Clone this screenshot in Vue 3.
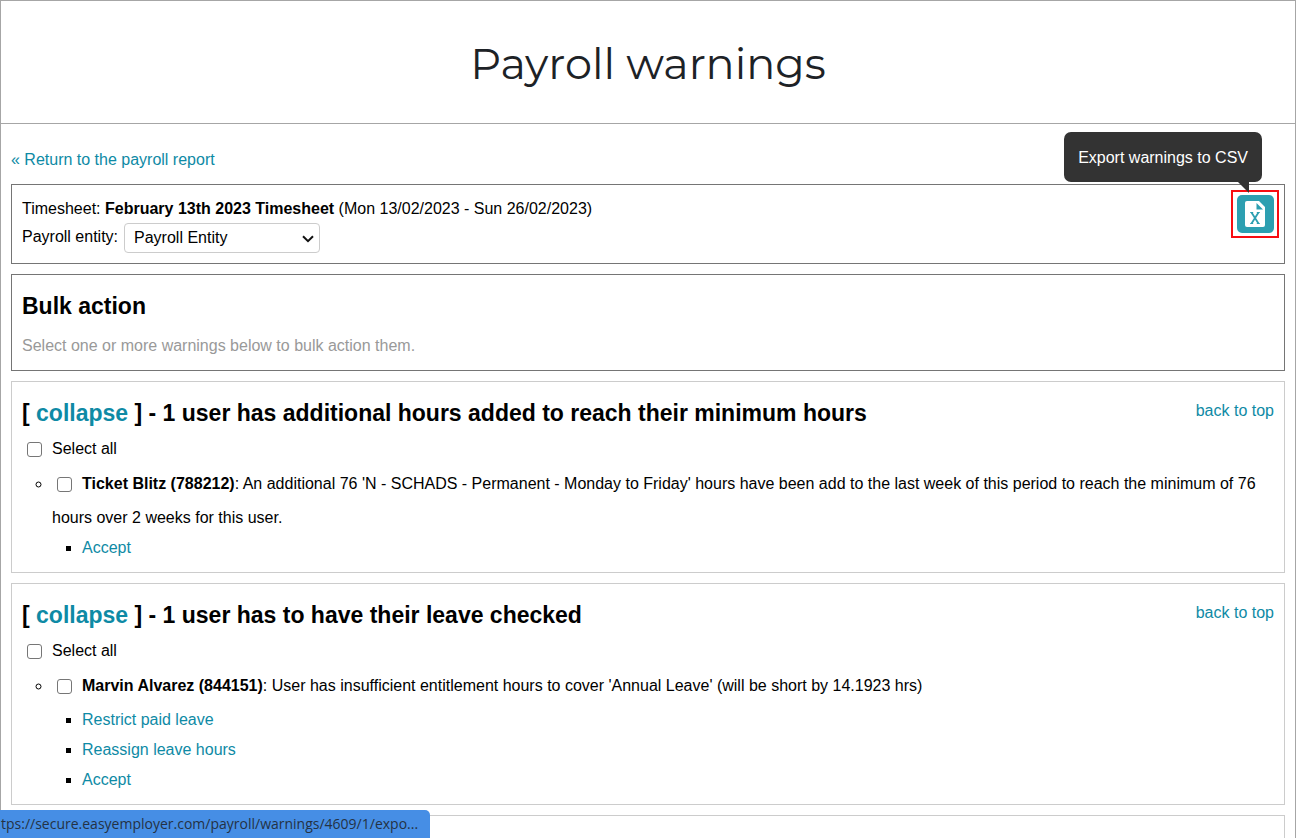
<script setup>
import { ref } from 'vue'

const entity = ref('Payroll Entity')

const groups = [
  {
    id: 'minimum-hours',
    title: '1 user has additional hours added to reach their minimum hours',
    user: 'Ticket Blitz (788212)',
    message:
      "An additional 76 'N - SCHADS - Permanent - Monday to Friday' hours have been add to the last week of this period to reach the minimum of 76 hours over 2 weeks for this user.",
    actions: ['Accept'],
  },
  {
    id: 'leave',
    title: '1 user has to have their leave checked',
    user: 'Marvin Alvarez (844151)',
    message:
      "User has insufficient entitlement hours to cover 'Annual Leave' (will be short by 14.1923 hrs)",
    actions: ['Restrict paid leave', 'Reassign leave hours', 'Accept'],
  },
]
</script>

<template>
  <div class="page">
    <header class="page-header">
      <h1>Payroll warnings</h1>
    </header>

    <main class="content">
      <a class="return" href="#">« Return to the payroll report</a>

      <section class="panel panel-info">
        <div class="info">
          <div class="timesheet">
            Timesheet: <strong>February 13th 2023 Timesheet</strong> (Mon 13/02/2023 - Sun 26/02/2023)
          </div>
          <div class="entity-row">
            <label for="entity">Payroll entity:</label>
            <span class="select-wrap">
              <select id="entity" v-model="entity">
                <option>Payroll Entity</option>
              </select>
              <svg class="chevron" viewBox="0 0 12 8" aria-hidden="true">
                <path d="M1 1.2 6 6.2 11 1.2" fill="none" stroke="#111" stroke-width="2" />
              </svg>
            </span>
          </div>
        </div>
        <div class="export">
          <button type="button" class="export-button" aria-label="Export warnings to CSV">
            <svg viewBox="0 0 20 26" aria-hidden="true">
              <path fill="#fff" d="M2 0H14L20 6V24Q20 26 18 26H2Q0 26 0 24V2Q0 0 2 0Z" />
              <path fill="#2d9fb1" d="M11.500 2 18 8.500H11.500Z" />
              <path d="M6.500 11.500 13.500 22.500M13.500 11.500 6.500 22.500" fill="none" stroke="#2d9fb1" stroke-width="1.800" />
              <path d="M5.200 11.500H8.200M11.800 11.500H14.800M5.200 22.500H8.200M11.800 22.500H14.800" stroke="#2d9fb1" stroke-width="1" />
            </svg>
          </button>
          <div class="tooltip" role="tooltip">Export warnings to CSV</div>
        </div>
      </section>

      <section class="panel panel-dark">
        <h2>Bulk action</h2>
        <p class="hint">Select one or more warnings below to bulk action them.</p>
      </section>

      <section v-for="group in groups" :key="group.id" class="panel">
        <div class="group-head">
          <h2>[ <a href="#">collapse</a> ] - {{ group.title }}</h2>
          <a class="top-link" href="#">back to top</a>
        </div>
        <label class="select-all"><input type="checkbox" />Select all</label>
        <ul class="warnings">
          <li>
            <input :id="group.id" class="row-check" type="checkbox" />
            <label :for="group.id"><strong>{{ group.user }}</strong>: {{ group.message }}</label>
            <ul class="actions">
              <li v-for="action in group.actions" :key="action"><a href="#">{{ action }}</a></li>
            </ul>
          </li>
        </ul>
      </section>

      <section class="panel panel-next"></section>
    </main>

    <div class="status">tps://secure.easyemployer.com/payroll/warnings/4609/1/expo...</div>
  </div>
</template>

<style>
body {
  background: #fff;
}
</style>

<style scoped>
.page {
  box-sizing: border-box;
  height: 100vh;
  overflow: hidden;
  border: 1px solid #a6a6a6;
  border-bottom: 0;
  color: #000;
  font: 16px/30px "Liberation Sans", Arial, sans-serif;
}

a {
  color: #0e8aa5;
  text-decoration: none;
}

.page-header {
  padding: 33px 0 29px;
  border-bottom: 1px solid #a6a6a6;
}

h1 {
  margin: 0;
  color: #1d2226;
  font: 400 43px/60px Montserrat, Inter, sans-serif;
  text-align: center;
}

.content {
  display: flex;
  flex-direction: column;
  gap: 10px;
  padding: 22px 10px 0;
}

.return {
  align-self: flex-start;
  line-height: 28px;
}

.panel {
  padding: 10px 10px 9px;
  border: 1px solid #ccc;
}

.panel-info,
.panel-dark {
  border-color: #757575;
}

.panel-info {
  display: flex;
  justify-content: space-between;
  align-items: flex-start;
  padding: 5px 5px 10px 10px;
}

.info {
  padding-top: 5px;
}

.timesheet {
  line-height: 28px;
}

.entity-row {
  display: flex;
  gap: 6px;
}

.entity-row label {
  line-height: 28px;
}

.select-wrap {
  position: relative;
  display: flex;
}

select {
  appearance: none;
  width: 196px;
  height: 30px;
  padding: 0 30px 0 9px;
  border: 1px solid #ccc;
  border-radius: 4px;
  background: #fff;
  color: #000;
  font: inherit;
  line-height: 28px;
}

.chevron {
  position: absolute;
  top: 12px;
  right: 6px;
  width: 12px;
  height: 8px;
  pointer-events: none;
}

.export {
  position: relative;
  padding: 3px 3px 3px 4px;
  border: 2px solid #f80d12;
}

.export-button {
  display: flex;
  align-items: center;
  justify-content: center;
  width: 37px;
  height: 38px;
  padding: 0 1px 0 0;
  border: 0;
  border-radius: 5px;
  background: #2d9fb1;
}

.export-button svg {
  width: 20px;
  height: 26px;
}

.tooltip {
  position: absolute;
  right: 15px;
  bottom: 54px;
  padding: 11px 14px 9px;
  border-radius: 7px;
  background: #333;
  color: #fff;
  white-space: nowrap;
}

.tooltip::after {
  content: "";
  position: absolute;
  top: 100%;
  right: 13px;
  border-top: 11px solid #333;
  border-left: 11px solid transparent;
}

h2 {
  margin: 0;
  font: 700 23px/42px "Arial Black", "Liberation Sans", sans-serif;
}

.hint {
  margin: 4px 0 0;
  color: #999;
}

.group-head {
  display: flex;
  justify-content: space-between;
}

.top-link {
  line-height: 38px;
}

input[type="checkbox"] {
  appearance: none;
  box-sizing: border-box;
  width: 15px;
  height: 15px;
  border: 1px solid #767676;
  border-radius: 3px;
  background: #fff;
}

.select-all {
  display: flex;
  align-items: center;
}

.select-all input {
  margin: 0 10px 0 5px;
}

.warnings,
.actions {
  margin: 0;
  padding-left: 30px;
}

.warnings {
  margin-top: 2px;
  list-style: circle;
}

.actions {
  list-style: square;
}

.row-check {
  margin: 11px 10px 11px 5px;
  vertical-align: middle;
}

.panel-next {
  min-height: 100px;
}

.status {
  position: fixed;
  left: 0;
  bottom: 0;
  padding: 0 12px 0 1px;
  border-radius: 0 5px 0 0;
  background: #468ee5;
  color: #243244;
  font: 14px/28px "Open Sans", "Noto Sans", sans-serif;
}
</style>
